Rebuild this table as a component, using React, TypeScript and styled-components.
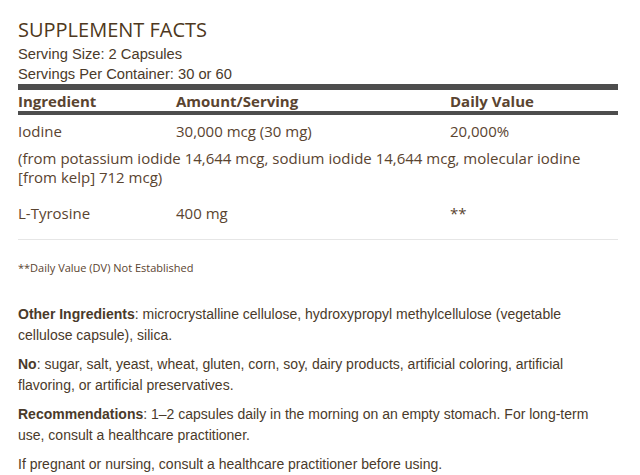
import React from "react";
import styled, { createGlobalStyle } from "styled-components";

const Global = createGlobalStyle`
  html, body { margin: 0; padding: 0; background: #fff; }
  body { font-family: "Open Sans", sans-serif; }
`;

const Page = styled.div`
  padding: 16px 22px 0 18px;
  color: #5a4430;
`;

const Title = styled.h1`
  margin: 0;
  font-family: "Open Sans", sans-serif;
  font-weight: 400;
  font-size: 20px;
  line-height: 28px;
  color: #4e3820;
`;

const Serving = styled.div`
  font-family: "Liberation Sans", Arial, sans-serif;
  font-size: 14.7px;
  line-height: 20px;
  color: #4a3a2a;
`;

const Table = styled.div`
  border-top: 6px solid #4d4d4d;
  border-bottom: 1px solid #e6e6e6;
  padding-bottom: 16px;
`;

const Row = styled.div<{ $head?: boolean; $gap?: number }>`
  display: grid;
  grid-template-columns: 158px 274px 1fr;
  font-size: 15px;
  line-height: 20px;
  font-weight: ${(p) => (p.$head ? 700 : 400)};
  padding-top: ${(p) => (p.$head ? 1 : p.$gap ?? 6)}px;
  ${(p) => (p.$head ? "border-bottom: 4px solid #4d4d4d;" : "")}
`;

const Note = styled.div`
  font-size: 15px;
  line-height: 19px;
  padding-top: 8px;
`;

const Footnote = styled.div`
  font-size: 11px;
  line-height: 16px;
  margin-top: 20px;
`;

const Para = styled.p`
  margin: 0 0 8px;
  font-family: "Liberation Sans", Arial, sans-serif;
  font-size: 14px;
  line-height: 21px;
  color: #4a3a2a;
  &:first-of-type { margin-top: 28px; }
  b { font-weight: 700; }
`;

export default function App() {
  return (
    <>
      <Global />
      <Page>
        <Title>SUPPLEMENT FACTS</Title>
        <Serving>Serving Size: 2 Capsules</Serving>
        <Serving>Servings Per Container: 30 or 60</Serving>
        <Table>
          <Row $head>
            <span>Ingredient</span>
            <span>Amount/Serving</span>
            <span>Daily Value</span>
          </Row>
          <Row>
            <span>Iodine</span>
            <span>30,000 mcg (30 mg)</span>
            <span>20,000%</span>
          </Row>
          <Note>
            (from potassium iodide 14,644 mcg, sodium iodide 14,644 mcg, molecular iodine [from kelp] 712 mcg)
          </Note>
          <Row $gap={16}>
            <span>L-Tyrosine</span>
            <span>400 mg</span>
            <span>**</span>
          </Row>
        </Table>
        <Footnote>**Daily Value (DV) Not Established</Footnote>
        <Para>
          <b>Other Ingredients</b>: microcrystalline cellulose, hydroxypropyl methylcellulose (vegetable cellulose capsule), silica.
        </Para>
        <Para>
          <b>No</b>: sugar, salt, yeast, wheat, gluten, corn, soy, dairy products, artificial coloring, artificial flavoring, or artificial preservatives.
        </Para>
        <Para>
          <b>Recommendations</b>: 1–2 capsules daily in the morning on an empty stomach. For long-term use, consult a healthcare practitioner.
        </Para>
        <Para>If pregnant or nursing, consult a healthcare practitioner before using.</Para>
      </Page>
    </>
  );
}
